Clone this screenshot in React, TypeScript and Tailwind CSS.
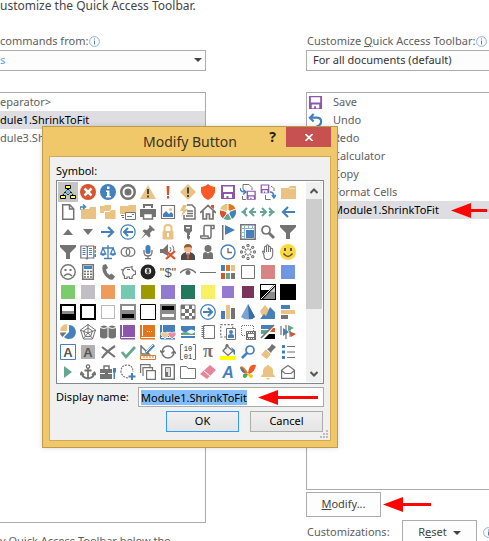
import React, { useEffect, useRef, useState } from 'react';

// Office palette
const G = '#737373';
const B = '#4580bc';
const Y = '#eac282';
const R = '#d9532f';
const P = '#8c57ab';
const T = '#66a690';
const O = '#e3761c';

const line = (stroke: string, width = 1.5) => ({ fill: 'none', stroke, strokeWidth: width });

const Floppy = ({ color = P }: { color?: string }) => (
  <path fill={color} fillRule="evenodd" d="M1 1h14v14H1zM3 2.500v5.500h10V2.500zM4 10v4h2.500v-2h2v2H12v-4z" />
);

const Funnel = () => <path fill={G} d="M0 1h16v2l-6 6v6H6V9L0 3z" />;

const Folder = () => <path fill={Y} d="M1 4h7l2-2h6v13H1z" />;

const Book = ({ color }: { color: string }) => (
  <path fill={color} d="M0 1h2v11H0zM3 1h12v12H1v1h14v1.500H1L0 14.500V12h3z" />
);

const Swatch = ({ color }: { color: string }) => <rect x="1" y="1" width="14" height="14" fill={color} />;

const symbols: [string, React.ReactNode][] = [
  // row 1
  ['Hierarchy', <>
    <path {...line('#000', 1)} d="M8 4v2M5 8l-2 3M11 8l2 3M8 5L5 8l3 3 3-3z" strokeDasharray="1.500 .7" />
    <path fill="#35d6e8" d="M8 6l2 2-2 2-2-2z" />
    <path fill="#ffff4d" stroke="#000" d="M5.500 1.500h5v3h-5zM.5 11.500h5v3h-5zM10.500 11.500h5v3h-5z" />
  </>],
  ['Error', <>
    <circle cx="8" cy="8" r="8" fill={R} />
    <path {...line('#fff', 2.5)} d="M4.500 4.500l7 7M11.500 4.500l-7 7" />
  </>],
  ['Information', <>
    <circle cx="8" cy="8" r="8" fill={B} />
    <path fill="#fff" d="M7 2.500h2.500V5H7zM6 6.500h3.500V12H11v1.500H6V12h1V8H6z" />
  </>],
  ['Target', <>
    <circle cx="8" cy="8" r="8" fill={G} />
    <circle cx="8" cy="8" r="4.500" fill="none" stroke="#fff" strokeWidth="2" />
  </>],
  ['Warning', <>
    <path fill={Y} d="M8 1l8 14H0z" />
    <path fill="#444" d="M7 5h2v5H7zM7 11.500h2v2H7z" />
  </>],
  ['Important', <path fill={R} d="M6.500 2h3L9 11H7zM7 12h2v2.500H7z" />],
  ['Caution', <>
    <path fill={Y} d="M8 0l8 8-8 8-8-8z" />
    <path fill="#444" d="M7 3.500h2v6H7zM7 11h2v2H7z" />
  </>],
  ['Shield', <path fill="#fb5a26" d="M1 3q4 0 7-3 3 3 7 3v5q-1 5-7 8-6-3-7-8z" />],
  ['Save', <Floppy />],
  ['Save As', <>
    <path {...line(G, 1)} d="M3 5V.5h6l3 3V6M2.500 12v3.500H6" />
    <path {...line(B)} d="M0 4q0 4 5 4M3 5.500L6 8l-3 2.500" />
    <g transform="translate(6 6) scale(.65)"><Floppy /></g>
  </>],
  ['Save and Refresh', <>
    <g transform="scale(.62)"><Floppy /></g>
    <path {...line(G, 1)} d="M5.500 11v4.500h5M11 2.500h1l2 2V7" />
    <path {...line(B)} d="M10 8q4 0 4 5M12 11l2 3 2-3" />
  </>],
  ['Open', <><Folder /><path stroke="#f7e3bf" d="M9 4.500h6" /></>],
  // row 2
  ['New', <path {...line(G)} d="M2.700 .8h7l4 4v10.400h-11zM9.500 1v4h4" />],
  ['Open Folder', <>
    <path fill={Y} d="M1 5h8l1-2h6v12H1z" />
    <path {...line(B)} d="M0 6V3h4M3 .5L5.500 3 3 5" />
  </>],
  ['Folders', <>
    <path fill={Y} d="M0 2h4l1-1h6v8H0z" />
    <path fill={Y} stroke="#fff" d="M4.500 7.500h5l1.500-2h5v10H4.500z" />
  </>],
  ['Mail Folder', <>
    <path fill={Y} d="M0 2h8l1-1h7v9H0z" />
    <path fill="#fff" stroke={G} d="M5.500 8.500h10v7h-10z" />
    <path stroke={B} d="M12 10.500h2M7 12.500h5" />
    <path stroke={G} d="M1 11.500h3M2 13.500h2" />
  </>],
  ['Print', <>
    <path fill={G} d="M3 0h10v4H3zM0 5h16v8h-3v-3H3v3H0z" />
    <path fill="#fff" stroke={G} strokeWidth="1.500" d="M3.500 9.500h9v5.500h-9z" />
    <path fill="#fff" d="M5 2h6v3H5z" />
  </>],
  ['Picture', <>
    <path {...line(G, 1.2)} d="M1.500 1.500h13v13h-13z" />
    <path fill={B} d="M3 13V10l3-3 3 3 2-2 2 2v3z" />
    <circle cx="10.500" cy="5.500" r="1.500" fill={Y} />
  </>],
  ['Quick Form', <>
    <path {...line(G)} d="M7 1h5l3 3v11H4V11M7 7h6M7 9.500h6M6 12h7" />
    <path fill={Y} d="M3 1h4L5 5h3L1 13l2-6H0z" />
  </>],
  ['Home', <>
    <path {...line(G, 1.7)} d="M0 9l8-7.500L16 9M3 7v8h3.500v-5h3v5H13V7" />
    <path fill={R} d="M11 1h3v4l-3-2z" />
  </>],
  ['Color Wheel', <>
    <circle cx="8" cy="8" r="8" fill={T} />
    <path fill={O} d="M8 8V0a8 8 0 0 1 7.700 6z" />
    <path fill={Y} d="M8 8L0 6.500A8 8 0 0 1 8 0z" />
    <path fill={R} d="M8 8l-5 6.200A8 8 0 0 1 .1 6.500z" />
    <path fill={B} d="M8 8l7.700-2a8 8 0 0 1-3.700 8.500z" />
    <path {...line('#fff', 1)} d="M8 8V0M8 8l8-3M8 8l4 8M8 8l-5 7M8 8L0 5.500" />
    <circle cx="8" cy="8" r="2" fill="#fff" />
  </>],
  ['Rewind', <path {...line(T, 2)} d="M7 4L3 8l4 4M14 4l-4 4 4 4M1.500 8H6M9 8h7" />],
  ['Forward', <path {...line(T, 2)} d="M2 4l4 4-4 4M9 4l4 4-4 4M0 8h5M9 8h5.500" />],
  ['Back', <path {...line(B, 2.2)} d="M8 3L3 8l5 5M3 8h12" />],
  // row 3
  ['Up', <path fill={G} d="M8 5l5 6H3z" />],
  ['Down', <path fill={G} d="M8 11l5-6H3z" />],
  ['Next', <path {...line(B, 2.2)} d="M8 3l5 5-5 5M13 8H1" />],
  ['Previous', <>
    <circle cx="8" cy="8" r="7.200" {...line(B, 1.2)} />
    <path {...line(B, 2)} d="M8 4L4 8l4 4M4 8h9" />
  </>],
  ['Pin', <path fill={G} d="M10 1l5 5-1.500 1-1-.5L10 9l.5 3-1.500 1.500L6 10.500 1 15l4-5.500L2.500 7 4 5.500 7 6l2.500-2.500L9 2z" />],
  ['Lock', <>
    <path {...line(Y, 2)} d="M4.500 8V4q0-3 3.500-3t3.500 3v4" />
    <rect x="2.500" y="7" width="11" height="8.500" rx="1" fill={Y} />
    <path fill="#fff" d="M7 9h2v4H7z" />
  </>],
  ['Key', <path fill={G} fillRule="evenodd" d="M4 1h8v6l-2 2v2H9v1h1v2l-1.500 2L7 14V9L4 7zM6 3v1.500h4V3z" />],
  ['Script', <path {...line(G)} d="M5 1.500h9v3h-3M5 1.500q-1 0-1 2v8M11 2v10q0 2.500-2 2.500H2q-1.500 0-1.500-2.500h7.500q0 2 1.500 2.500" />],
  ['Flag', <><path fill={G} d="M2 1h1.500v15H2z" /><path fill={B} d="M5 1l10 5-10 5z" /></>],
  ['Select Table', <>
    <path {...line(G)} d="M.8 .8h14.400v14.400H.8z" />
    <path {...line('#8fb2d8', 1)} d="M1 4.500h14M1 8.500h3M1 12.500h3M4.500 1v14M8.500 1v3M12.500 1v3" />
    <path fill={B} d="M6 6h8v8H6z" />
  </>],
  ['Find', <><circle cx="6" cy="6" r="4" {...line(G, 1.7)} /><path {...line(G, 3)} d="M9 9l5 5" /></>],
  ['Filter', <Funnel />],
  // row 4
  ['Filter Records', <Funnel />],
  ['Address Book', <>
    <path {...line(G, 1.2)} d="M.8 2h5.500l1 1 1-1h5.500v12H8l-1 1-1-1H.8zM7.300 3v11" />
    <path {...line(B, 1)} d="M2.500 4.500h3M2.500 6.500h3M2.500 8.500h3M2.500 10.500h3M9 4.500h3M9 6.500h3M9 8.500h3M9 10.500h3" />
    <path fill={R} d="M14.500 2H16v3h-1.500z" /><path fill={T} d="M14.500 6H16v3h-1.500z" /><path fill={B} d="M14.500 10H16v3h-1.500z" />
  </>],
  ['Balance', <path {...line(B, 1.3)} d="M8 1v13M4 14.500h8M2 4h12M3 4L.7 10h5L3 4M13 4l-2.500 6h5L13 4M1 10q2 2 4 0M11 10q2 2 4 0" />],
  ['Link', <g {...line(G, 1.3)}><circle cx="5.500" cy="8" r="4.300" /><circle cx="10.500" cy="8" r="4.300" /></g>],
  ['Microphone', <>
    <rect x="5.500" y="1" width="5" height="9" rx="2.500" fill={B} />
    <path {...line(G, 1.3)} d="M4 6v2q0 4 4 4t4-4V6M8 12v3M5 14.700h6" />
  </>],
  ['Mute', <>
    <path fill={G} d="M0 5h3l5-5v12L3 9H0z" />
    <path {...line(G, 1)} d="M10 3q2 2 0 5M12.500 1.500q2 3 1 5" />
    <path {...line(R, 2.3)} d="M6 7l9 8M15 7l-9 8" />
  </>],
  ['Account', <>
    <path fill="#4b4b4b" d="M1 16v-4q1-3 5-4h4q4 1 5 4v4z" />
    <path fill="#fff" d="M6 8h4l-2 7z" />
    <path fill={R} d="M7.300 9h1.400l.6 5L8 16l-1.300-2z" />
    <circle cx="8" cy="4.500" r="4" fill="#f1b68c" />
    <path fill="#955c37" d="M4 4q0-4 4-4t4 4q-3-2-8 0" />
  </>],
  ['Contact', <>
    <circle cx="8" cy="4.500" r="3.500" fill={G} />
    <path fill={G} d="M3 15v-4q0-3 3-3l2 1.500L10 8q3 0 3 3v4z" />
  </>],
  ['Clock', <><circle cx="8" cy="8" r="7" {...line(B, 1.4)} /><path {...line(G, 1.4)} d="M8 4v4.500h4" /></>],
  ['Burst', <g {...line(G, 1.1)}>
    <circle cx="8" cy="1.500" r="1.100" /><circle cx="8" cy="14.500" r="1.100" />
    <circle cx="1.500" cy="8" r="1.100" /><circle cx="14.500" cy="8" r="1.100" />
    <circle cx="3.300" cy="3.300" r="1.100" /><circle cx="12.700" cy="3.300" r="1.100" />
    <circle cx="3.300" cy="12.700" r="1.100" /><circle cx="12.700" cy="12.700" r="1.100" />
    <path d="M8 4v2M8 10v2M4 8h2M10 8h2M5 5l1.500 1.500M9.500 9.500L11 11M11 5L9.500 6.500M6.500 9.500L5 11" />
  </g>],
  ['Hand', <path {...line(G, 1.1)} d="M4 11L2.500 7.500q1-1 2 .5V3q1-1.500 2 0V1.500q1-1.500 2 0V3q1-1.500 2 0v2q1.200-1.500 2.200 0v6q-1 4.500-5 4.500T4 11M6.500 3v5M8.500 2.500V8M10.500 4v4" />],
  ['Smile', <>
    <circle cx="8" cy="8" r="8" fill="#ffd83b" />
    <path fill="#555" d="M4 4h2v3H4zM10 4h2v3h-2z" />
    <path {...line('#555', 1.4)} d="M3.500 9.500q4.500 6 9 0" />
  </>],
  // row 5
  ['Sad', <>
    <circle cx="8" cy="8" r="7.200" {...line(G, 1.4)} />
    <path fill={G} d="M4.500 5h2v2h-2zM9.500 5h2v2h-2z" />
    <path {...line(G, 1.4)} d="M4 12q4-4 8 0" />
  </>],
  ['Calculator', <>
    <path {...line(G)} d="M2.700 .8h10.600v14.400H2.700z" />
    <path fill={B} d="M4 2h8v3H4z" />
    <path {...line(G, 1.6)} strokeDasharray="2 1" d="M4 7.500h8M4 10.200h8M4 13h8" />
  </>],
  ['Phone', <path fill={G} d="M3 1l3-1 2 4-2 1.500Q6.500 9 9.500 11l2-1.500 3.500 3-2 3q-4 1-8-4T3 1" />],
  ['Piggy Bank', <path {...line(G, 1.2)} d="M1 6q2-1 2 1M3 7q1-4 6-3.500l3-1v2.500l2 2h1.500v3.500H14l-2 2v2H9.500v-1.500H7v1.500H4.500V12Q2 10 3 7M7 5.500h3" />],
  ['Eight Ball', <>
    <circle cx="8" cy="8" r="7.500" fill="#222" />
    <circle cx="8" cy="7" r="3.200" fill="#eee" />
    <circle cx="8" cy="5.800" r="1" {...line('#111', 1)} /><circle cx="8" cy="8.200" r="1.100" {...line('#111', 1)} />
  </>],
  ['Currency Format', <text x="8" y="13" textAnchor="middle" fontSize="13" fontFamily="Liberation Sans, sans-serif" fill="#555">"$"</text>],
  ['Watch', <><path {...line(G, 1.6)} d="M0 9q8-8 16 0" /><circle cx="8" cy="8.500" r="2.500" fill={G} /></>],
  ['Line', <path stroke={G} d="M0 8.500h16" />],
  ['Color Blocks', <>
    <path fill={B} d="M1 1h4v6H1z" /><path fill={O} d="M6 1h4v6H6z" /><path fill={Y} d="M11 1h4v6h-4z" />
    <path fill={R} d="M1 9h4v6H1z" /><path fill={T} d="M6 9h4v6H6z" /><path fill={G} d="M11 9h4v6h-4z" />
  </>],
  ['White', <path {...line(G, 1)} d="M1.500 1.500h13v13h-13z" />],
  ['Rose', <Swatch color="#d98484" />],
  ['Cornflower', <Swatch color="#7098e0" />],
  // row 6
  ['Green', <Swatch color="#7bcd6c" />],
  ['Silver', <Swatch color="#c1bec6" />],
  ['Orange', <Swatch color="#ef9b5c" />],
  ['Turquoise', <Swatch color="#76c9b1" />],
  ['Olive', <Swatch color="#9d9a00" />],
  ['Lavender', <Swatch color="#9379d0" />],
  ['Forest', <Swatch color="#24795d" />],
  ['Yellow', <Swatch color="#f8f263" />],
  ['Violet', <rect x="2" y="2" width="12" height="12" fill="#9379d0" />],
  ['Maroon', <rect x="2" y="2" width="12" height="12" fill="#7b3459" />],
  ['Contrast', <>
    <path d="M0 0h16v16H0z" />
    <path fill="#fff" d="M1 1h13L9 6H1z" />
    <path fill="#8b8b8b" d="M15 3v12H3z" /><path fill="#d0d0d0" d="M15 3v5l-5 0z" />
    <path {...line('#fff', 1)} d="M15 1L1 15" />
  </>],
  ['Black', <path d="M0 0h16v16H0z" />],
  // row 7
  ['Fill Frame', <><path d="M0 0h16v16H0z" /><path fill="#fff" d="M2 2h12v5H2z" /><path fill="#8b8b8b" d="M2 7h12v3H2z" /></>],
  ['Thick Frame', <path {...line('#000', 2)} d="M1 1h14v14H1z" />],
  ['Dotted Frame', <path {...line(G, 1)} strokeDasharray="1 1" d="M1.500 1.500h13v13h-13z" />],
  ['Lower Fill', <><path fill="#8b8b8b" d="M0 0h16v16H0z" /><path fill="#fff" d="M2 2h12v4H2z" /><path d="M2 10h12v4H2z" /></>],
  ['Thin Frame', <path {...line('#000', 1)} d="M.5 .5h15v15H.5z" />],
  ['Upper Fill', <><path fill="#8b8b8b" d="M0 0h16v16H0z" /><path d="M2 2h12v4H2z" /><path fill="#fff" d="M2 10h12v3H2z" /></>],
  ['Pattern', <>
    <path fill="#fff" stroke={G} d="M1 1h14v14H1z" />
    <path fill={G} d="M1 1h4v4H1zM9 1h3v4H9zM5 5h4v4H5zM12 5h3v4h-3zM1 9h4v3H1zM9 9h3v3H9zM5 12h4v3H5zM12 12h3v3h-3z" />
  </>],
  ['Go', <><circle cx="8" cy="8" r="7.300" {...line(B, 1.3)} /><path {...line(B, 2)} d="M8 4l4 4-4 4M12 8H3" /></>],
  ['Column Chart', <><path fill={B} d="M1 7h4v8H1z" /><path fill={Y} d="M6 1h4v14H6z" /><path fill={G} d="M11 4h4v11h-4z" /></>],
  ['Cone', <><path fill="#7da5d0" d="M8 0l7 13q-7 5-14 0z" /><path fill="#376ea8" d="M8 0l7 13q-3 3-6 2z" /></>],
  ['Area Chart', <><path fill={Y} d="M0 7l5-6 5 6-6 8z" /><path fill={B} d="M0 15l4-5 2 2 4-9 5 5v7z" /></>],
  ['Bar Chart', <><path fill={B} d="M1 1h9v4H1z" /><path fill={Y} d="M1 6h14v4H1z" /><path fill={G} d="M1 11h7v4H1z" /></>],
  // row 8
  ['Pie Chart', <>
    <path fill={B} d="M9 1a7 7 0 1 1-5 12l5-5z" />
    <path fill={Y} d="M7 0v7H0a7 7 0 0 1 7-7z" />
    <path fill={G} d="M0 8.500h6.500L2.500 13Q0 11 0 8.500" />
  </>],
  ['Radar Chart', <path {...line(G, 1)} d="M8 .5l7.500 5.500-3 9h-9l-3-9zM8 4l4.500 3-2 5.500h-5L3.500 7zM8 0v9M0 6l8 3 8-3M3 15l5-6 5 6" />],
  ['Database', <>
    <path fill={G} d="M0 3q4-3 8 0v10q-4 3-8 0zM8 3q4-3 8 0v10q-4 3-8 0z" />
    <path {...line('#fff', 1)} d="M0 3.500q4 2 7.500 0M8.500 3.500q4 2 7.500 0M8 2v13" />
  </>],
  ['Purple Book', <Book color={P} />],
  ['Orange Book', <>
    <Book color={O} />
    <path stroke="#fff" strokeDasharray="1 1" d="M7 7.500h5" />
  </>],
  ['Greeting', <>
    <Book color={B} />
    <path fill="#f2cb8a" stroke="#fff" strokeWidth=".7" d="M5 15l-4-4q-1-3 2-3l2 1 2-1q3 0 2 3z" />
    <path fill="#ec8ba0" stroke="#fff" strokeWidth=".7" d="M12 15l-4-4q-1-3 2-3l2 1 2-1q3 0 2 3z" />
  </>],
  ['Landscape', <>
    <path fill={B} d="M1 2h14v5q-4-3-7 0T1 6z" />
    <path fill={T} d="M1 9q5-2 8 0t6-1v3H1z" /><path fill={B} d="M1 12h14v2H1z" />
  </>],
  ['Notebook', <><path {...line(G, 1)} d="M3.500 1.500h11v13h-11z" /><path stroke={G} strokeDasharray="1 1" strokeWidth="3" d="M3 2v12" /></>],
  ['Select Contact', <>
    <path {...line(G, 1.2)} strokeDasharray="2 1.500" d="M6 13H.7V.7h12V4" />
    <path fill="#fff" stroke={G} d="M6.500 4.500h9v11h-9z" />
    <circle cx="11" cy="8" r="2" fill={B} /><path fill={B} d="M8 14v-2q0-2 3-2t3 2v2z" />
  </>],
  ['Select Video', <>
    <path {...line(G, 1)} strokeDasharray="1 1" d="M5 11.500H1.500v-10h12V7" />
    <path fill={G} d="M6 7h10v9H6z" /><path stroke="#fff" strokeDasharray="1 1" d="M7 8.500h8M7 14.500h8" /><path fill="#fff" d="M8 10h6v3H8z" />
  </>],
  ['Color Scales', <>
    <path fill={B} d="M1 1h13L10 5H1z" /><path fill={T} d="M1 6h8l-4 4H1z" />
    <path fill={R} d="M13 4h2v4h-5z" /><path d="M9 10h6v5H4z" /><path {...line(G, 1.6)} d="M14 1L1 14" />
  </>],
  ['Gantt', <>
    <path {...line(G, 1.2)} d="M1 2v9M6 1v14" /><path fill={T} d="M8 1l6 3-6 3z" /><path fill={B} d="M3 4l6 4-6 4z" /><path fill={R} d="M9 7l7 3-5 3z" />
    <path stroke={G} d="M10 5v8" />
  </>],
  // row 9
  ['Text Box', <>
    <path {...line(B, 1)} d="M.5 .5h15v15H.5z" />
    <text x="8" y="13" textAnchor="middle" fontSize="13" fontWeight="bold" fontFamily="Liberation Sans, sans-serif" fill="#555">A</text>
  </>],
  ['Shaded Text', <>
    <path fill="#b1b1b1" d="M1 1h14v14H1z" />
    <text x="8" y="13" textAnchor="middle" fontSize="13" fontWeight="bold" fontFamily="Liberation Sans, sans-serif" fill="#555">A</text>
  </>],
  ['Delete', <path {...line(G, 2.2)} d="M2 3l13 10M15 2Q6 8 2 14" />],
  ['Accept', <path {...line(T, 2.7)} d="M2 8l4 5L15 3" />],
  ['Design', <>
    <path {...line(G, 1.5)} d="M1 1v9h8L1 2" /><path {...line(B, 3)} d="M14 1L6 9" /><path stroke="#fff" d="M13 1L6 8" />
    <path {...line(O, 1)} d="M.5 11.500h15v4H.5zM4 12v2M7 12v2M10 12v2M13 12v2" />
  </>],
  ['Sync', <path {...line(G, 1.5)} d="M2 8a6 6 0 0 1 12 0M2 8a6 6 0 0 0 12 0M0 6.500L2 9l2.500-2.500M11.500 9.500L14 7l2 2.500" />],
  ['Binary', <>
    <path {...line(G, 1)} d="M3 .5H.5v15H3M13 .5h2.500v15H13" />
    <text x="8" y="7" textAnchor="middle" fontSize="7" fontFamily="Liberation Mono, monospace" fill="#222">10</text>
    <text x="8" y="15" textAnchor="middle" fontSize="7" fontFamily="Liberation Mono, monospace" fill="#222">01</text>
  </>],
  ['Pi', <text x="8" y="13" textAnchor="middle" fontSize="18" fontWeight="bold" fontFamily="Liberation Serif, serif" fill={G}>π</text>],
  ['Fill Color', <>
    <path fill="#f2f2f2" stroke={G} strokeWidth="1.300" d="M7 2l6 5-5 4.500L3 7zM6 5V1.500q1-2 2 0V4" />
    <path fill={B} d="M11 3l4 3v5q-2-1-2-4z" /><path fill="#ff0" d="M0 12h16v4H0z" />
  </>],
  ['Zoom', <><circle cx="10" cy="6" r="4" {...line(B, 1.7)} /><path {...line(B, 2.6)} d="M7 9l-5 5" /></>],
  ['Format Painter', <>
    <path fill={G} d="M12 0l4 3-4 4-1 2-4-4 2-1z" /><path fill={Y} d="M6 5l5 5-4 5-6-4z" /><path stroke="#fff" d="M6 5l5 5" />
  </>],
  ['Bullets', <><path fill={B} d="M2 1h3v3H2zM2 6.500h3v3H2zM2 12h3v3H2z" /><path stroke={G} strokeWidth="1.200" d="M7 2.500h8M7 8h8M7 13.500h8" /></>],
  // row 10
  ['Run', <path fill={T} d="M4 2l8 6-8 6z" />],
  ['Anchor', <><circle cx="8" cy="2.500" r="1.700" {...line(G, 1.3)} /><path {...line(G, 1.8)} d="M8 4v11M4.500 6.500h7M1.500 9q1 5 6.500 5.500Q13.500 14 14.500 9M0 11l1.500-2.500L4 11M12 11l2.500-2.500L16 11" /></>],
  ['Toolbox', <>
    <path {...line(G, 1.5)} d="M4 5V2h5v3" /><path fill={G} d="M0 5h13v10H0z" /><path stroke="#fff" d="M0 9.500h5M8 9.500h5" />
    <path stroke="#fff" strokeWidth="4" d="M14 4v12" /><path fill={B} d="M13 4h3v4l-1 1v6h-1.500V9L13 8z" />
  </>],
  ['Lasso', <><path {...line(G, 1.2)} strokeDasharray="2 1" d="M8 14q-6-1-7-6 0-7 6-7t6 7" /><path {...line(B, 2)} d="M12 9v7M8.500 12.500h7" /></>],
  ['Stack', <path {...line(G, 1.2)} fill="#fff" d="M.6 9V.6H10V3M3 12V3.600h9.500V6M6.600 6.600h8.800v8.800H6.600z" />],
  ['Switch', <><path {...line(G, 1.4)} d="M1.700 .7h12.600v14.600H1.700z" /><path fill="#ddd" stroke={G} d="M5.500 3.500h5v9h-5z" /><path fill={G} d="M6 8h2v4H6z" /></>],
  ['Tab', <path {...line(G, 1)} d="M.5 14.500v-12h6L8 4.500h7.500v10z" />],
  ['Eraser', <><path fill="#e5869a" d="M10 1l6 5-9 9-7-5z" /><path stroke="#fff" d="M4 7l6 5" /></>],
  ['WordArt', <text x="8" y="14" textAnchor="middle" fontSize="16" fontWeight="bold" fontStyle="italic" fontFamily="Liberation Sans, sans-serif" fill={B}>A</text>],
  ['Butterfly', <>
    <path fill={O} d="M8 9Q3 0 0 3q1 6 6 7z" /><path fill="#3478c5" d="M0 3q1 5 5 6l-1-3z" />
    <path fill="#f35a21" d="M8 9q1-10 8-8-1 7-7 9z" /><path fill="#4aaa47" d="M7 10q-5-1-4 3 3 3 5-3z" /><path fill="#f5c518" d="M8 10q5 0 5 2-2 5-5-1z" />
  </>],
  ['Reminder', <path fill={Y} d="M7 1h2v1q4 1 4 5v3l2 2v1H1v-1l2-2V7q0-4 4-5zM6 14h4l-2 2z" />],
  ['Read Mail', <path {...line(G, 1.2)} d="M1.600 14.400V6L8 1.500 14.400 6v8.400zM1.600 6.500L5 9.500h6l3.400-3" />],
];

const InfoIcon = () => (
  <svg viewBox="0 0 11 11" className="h-[11px] w-[11px] shrink-0" aria-hidden="true">
    <circle cx="5.5" cy="5.5" r="4.900" fill="#fff" stroke="#8aaede" />
    <path fill="#5c7ca8" d="M5 2.500h1v1H5zM5 4.500h1v4H5z" />
  </svg>
);

const DropArrow = () => (
  <svg viewBox="0 0 8 4" className="h-1 w-2 shrink-0" aria-hidden="true">
    <path fill="#444" d="M0 0h8L4 4z" />
  </svg>
);

const RedArrow = ({ length, className }: { length: number; className: string }) => (
  <svg width={length} height="15" viewBox={`0 0 ${length} 15`} className={className} aria-hidden="true">
    <path fill="#fb0505" d={`M0 7.500L20 0v6H${length}v3H20v6z`} />
  </svg>
);

const currentCommands = [
  { label: 'Save', icon: <Floppy /> },
  { label: 'Undo', icon: <path {...line(B, 2.3)} d="M6 1L2 5l4 4M2 5h7q5 0 5 4t-5 5.500" /> },
  { label: 'Redo' },
  { label: 'Calculator' },
  { label: 'Copy' },
  { label: 'Format Cells' },
  { label: 'Module1.ShrinkToFit', selected: true },
];

const ModifyDialog: React.FC = () => {
  const [name, setName] = useState('Module1.ShrinkToFit');
  const [symbol, setSymbol] = useState(0);
  const nameRef = useRef<HTMLInputElement>(null);

  useEffect(() => {
    nameRef.current?.focus();
    nameRef.current?.select();
  }, []);

  return (
    <div
      role="dialog"
      aria-labelledby="dialog-title"
      className="absolute left-[42px] top-[126px] w-[296px] border border-[#bd9b4e] bg-[#f0c869] px-1.5 pb-1.5 text-black shadow-[0_0_5px_rgba(0,0,0,0.15)]"
    >
      <div className="grid h-[29px] grid-cols-[1fr_auto_1fr] items-start">
        <h2 id="dialog-title" className="col-start-2 text-[14px] leading-[29px] text-[#3b3423]">Modify Button</h2>
        <div className="flex justify-end">
          <button aria-label="Help" className="h-5 w-[27px] text-[14px] font-bold leading-5 text-[#222]">?</button>
          <button aria-label="Close" className="flex h-5 w-[45px] items-center justify-center bg-[#c75050]">
            <svg viewBox="0 0 8 7" className="h-[7px] w-2"><path {...line('#fff', 1.6)} d="M.5 0l7 7M7.500 0l-7 7" /></svg>
          </button>
        </div>
      </div>

      <div className="relative border border-[#cfa956] bg-[#f0f0f0] px-1.5 pb-2">
        <div id="symbol-label" className="h-[23px] pt-1.5 leading-4">Symbol:</div>
        <div className="flex justify-between border border-[#828790] bg-white p-px">
          <div role="group" aria-labelledby="symbol-label" className="grid grid-cols-12">
            {symbols.map(([title, icon], index) => (
              <button
                key={title}
                title={title}
                onClick={() => setSymbol(index)}
                className={`flex h-5 w-5 items-center justify-center ${index === symbol ? 'bg-[#c5c5c5]' : ''}`}
              >
                <svg viewBox="0 0 16 16" className="h-4 w-4">{icon}</svg>
              </button>
            ))}
          </div>
          <div className="flex w-4 flex-col bg-[#f0f0f0]">
            <button aria-label="Scroll up" className="flex h-[17px] items-center justify-center">
              <svg viewBox="0 0 8 6" className="h-1.5 w-2"><path {...line('#555', 2)} d="M.5 5L4 1.500 7.500 5" /></svg>
            </button>
            <div className="h-[110px] bg-[#cdcdcd]" />
            <button aria-label="Scroll down" className="mt-auto flex h-[17px] items-center justify-center">
              <svg viewBox="0 0 8 6" className="h-1.5 w-2"><path {...line('#555', 2)} d="M.5 1L4 4.500 7.500 1" /></svg>
            </button>
          </div>
        </div>

        <div className="relative mt-[3px] flex h-5 items-center">
          <label htmlFor="display-name" className="w-[82px] shrink-0 whitespace-nowrap">Display name:</label>
          <input
            id="display-name"
            ref={nameRef}
            value={name}
            onChange={(e) => setName(e.target.value)}
            className="h-5 min-w-0 flex-1 border border-[#ababab] bg-white px-0.5 leading-[14px] outline-none selection:bg-[#84bdfb] selection:text-black"
          />
          <RedArrow length={60} className="absolute right-1.5 top-[3px]" />
        </div>

        <div className="mt-1 flex justify-end gap-[11px] pr-px">
          <button className="h-[21px] w-[73px] border border-[#3399ff] bg-linear-to-b from-[#f0f0f0] to-[#e5e5e5]">OK</button>
          <button className="h-[21px] w-[73px] border border-[#acacac] bg-linear-to-b from-[#f0f0f0] to-[#e5e5e5]">Cancel</button>
        </div>

        {/* resize grip */}
        <svg viewBox="0 0 8 8" className="absolute bottom-0.5 right-0.5 h-2 w-2" aria-hidden="true">
          <path fill="#bcbcbc" d="M6 0h2v2H6zM3 3h2v2H3zM6 3h2v2H6zM0 6h2v2H0zM3 6h2v2H3zM6 6h2v2H6z" />
        </svg>
      </div>
    </div>
  );
};

const App: React.FC = () => {
  return (
    <div className="relative h-screen overflow-hidden bg-white font-['Noto_Sans',sans-serif] text-[11px] text-[#5e5e5e]">
      <h1 className="h-8 text-[12px] leading-3 text-[#444]">ustomize the Quick Access Toolbar.</h1>

      <div className="grid grid-cols-[206fr_100fr_183fr]">
        {/* Available commands */}
        <div className="min-w-0">
          <label htmlFor="commands-from" className="flex h-[18px] items-center gap-px leading-4">
            commands from:<InfoIcon />
          </label>
          <div className="relative">
            <select id="commands-from" className="h-[21px] w-full appearance-none border border-l-0 border-[#ababab] bg-[#fdfdfd] text-[#5aa2e8]">
              <option>s</option>
            </select>
            <span className="pointer-events-none absolute right-1 top-2"><DropArrow /></span>
          </div>
          <ul className="mt-[21px] h-[431px] border border-l-0 border-[#ababab] leading-[18px]">
            <li>eparator&gt;</li>
            <li className="bg-[#dedde2] text-black">dule1.ShrinkToFit</li>
            <li>dule3.ShrinkToFit</li>
          </ul>
          <p className="mt-2.5 whitespace-nowrap leading-4">y Quick Access Toolbar below the</p>
        </div>

        {/* Current toolbar */}
        <div className="col-start-3 min-w-0">
          <label htmlFor="toolbar-scope" className="flex h-[18px] items-center gap-px whitespace-nowrap pl-px leading-4">
            <span>Customize <u>Q</u>uick Access Toolbar:</span><InfoIcon />
          </label>
          <select id="toolbar-scope" className="block h-[21px] w-full appearance-none border border-r-0 border-[#ababab] bg-[#fdfdfd] px-1.5 text-[#333]">
            <option>For all documents (default)</option>
          </select>
          <ul className="mt-[21px] h-[398px] border border-r-0 border-[#ababab] leading-[18px]">
            {currentCommands.map(({ label, icon, selected }) => (
              <li key={label} className={`relative flex items-center gap-2.5 px-px ${selected ? 'bg-[#dedde2] text-black' : ''}`}>
                <svg viewBox="0 0 16 16" className="h-[15px] w-[15px] shrink-0" aria-hidden="true">{icon}</svg>
                {label}
                {selected && <RedArrow length={36} className="absolute right-0.5 top-0.5" />}
              </li>
            ))}
          </ul>
          <div className="mt-0.5 flex items-center gap-0.5">
            <button className="h-[25px] w-[75px] border border-[#ababab] bg-[#fdfdfd] text-[#444]"><u>M</u>odify...</button>
            <RedArrow length={48} className="shrink-0" />
          </div>
          <div className="mt-[3px] flex items-center gap-1.5 pl-px">
            <span className="w-[89px] shrink-0">Customizations:</span>
            <button className="flex h-[25px] w-[75px] shrink-0 items-center justify-center gap-1.5 border border-[#ababab] bg-[#fdfdfd] text-[#444]">
              <span>R<u>e</u>set</span><DropArrow />
            </button>
            <InfoIcon />
          </div>
        </div>
      </div>

      <ModifyDialog />
    </div>
  );
};

export default App;
